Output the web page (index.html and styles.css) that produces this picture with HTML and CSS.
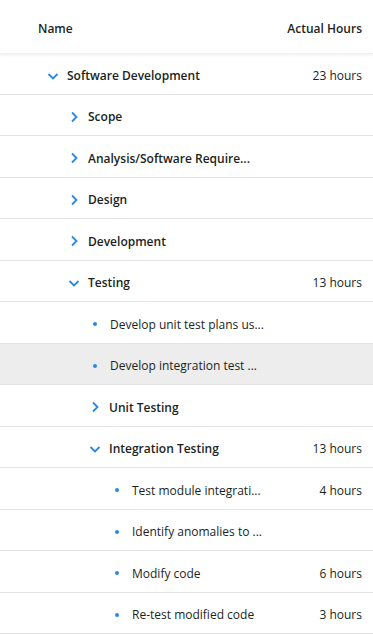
FILE: index.html
```html
<!DOCTYPE html>
<html>
<head>
<meta charset="utf-8">
<link rel="stylesheet" href="styles.css">
</head>
<body>
<div class="grid">
  <div class="header">
    <div class="hname">Name</div>
    <div class="hhours">Actual Hours</div>
  </div>
  <div class="rows">
    <div class="row lv1 group">
      <div class="name"><svg class="chev" viewBox="0 0 12 12"><path d="M1.5 4 L6 8.5 L10.5 4"/></svg><span>Software Development</span></div>
      <div class="hours">23 hours</div>
    </div>
    <div class="row lv2 group">
      <div class="name"><svg class="chev" viewBox="0 0 12 12"><path d="M4 1.5 L8.5 6 L4 10.5"/></svg><span>Scope</span></div>
      <div class="hours"></div>
    </div>
    <div class="row lv2 group">
      <div class="name"><svg class="chev" viewBox="0 0 12 12"><path d="M4 1.5 L8.5 6 L4 10.5"/></svg><span>Analysis/Software Require...</span></div>
      <div class="hours"></div>
    </div>
    <div class="row lv2 group">
      <div class="name"><svg class="chev" viewBox="0 0 12 12"><path d="M4 1.5 L8.5 6 L4 10.5"/></svg><span>Design</span></div>
      <div class="hours"></div>
    </div>
    <div class="row lv2 group">
      <div class="name"><svg class="chev" viewBox="0 0 12 12"><path d="M4 1.5 L8.5 6 L4 10.5"/></svg><span>Development</span></div>
      <div class="hours"></div>
    </div>
    <div class="row lv2 group">
      <div class="name"><svg class="chev" viewBox="0 0 12 12"><path d="M1.5 4 L6 8.5 L10.5 4"/></svg><span>Testing</span></div>
      <div class="hours">13 hours</div>
    </div>
    <div class="row lv3 task">
      <div class="name"><i class="dot"></i><span>Develop unit test plans us...</span></div>
      <div class="hours"></div>
    </div>
    <div class="row lv3 task selected">
      <div class="name"><i class="dot"></i><span>Develop integration test ...</span></div>
      <div class="hours"></div>
    </div>
    <div class="row lv3 group">
      <div class="name"><svg class="chev" viewBox="0 0 12 12"><path d="M4 1.5 L8.5 6 L4 10.5"/></svg><span>Unit Testing</span></div>
      <div class="hours"></div>
    </div>
    <div class="row lv3 group">
      <div class="name"><svg class="chev" viewBox="0 0 12 12"><path d="M1.5 4 L6 8.5 L10.5 4"/></svg><span>Integration Testing</span></div>
      <div class="hours">13 hours</div>
    </div>
    <div class="row lv4 task">
      <div class="name"><i class="dot"></i><span>Test module integrati...</span></div>
      <div class="hours">4 hours</div>
    </div>
    <div class="row lv4 task">
      <div class="name"><i class="dot"></i><span>Identify anomalies to ...</span></div>
      <div class="hours"></div>
    </div>
    <div class="row lv4 task">
      <div class="name"><i class="dot"></i><span>Modify code</span></div>
      <div class="hours">6 hours</div>
    </div>
    <div class="row lv4 task">
      <div class="name"><i class="dot"></i><span>Re-test modified code</span></div>
      <div class="hours">3 hours</div>
    </div>
  </div>
</div>
</body>
</html>
```
FILE: styles.css
```css
html, body {
  margin: 0;
  padding: 0;
  background: #ffffff;
}
body {
  font-family: "Open Sans", "Noto Sans", sans-serif;
  font-size: 12px;
  color: #201f1e;
  overflow: hidden;
}
.grid {
  width: 373px;
}
.header {
  height: 54px;
  display: flex;
  align-items: center;
  justify-content: space-between;
  padding: 4px 11px 0 38px;
  box-sizing: border-box;
  box-shadow: 0 1px 3px rgba(0,0,0,0.07);
  border-bottom: 1px solid #f0f0f0;
  position: relative;
  font-weight: 600;
}
.row {
  box-sizing: border-box;
  height: 40.5px;
  padding-top: 4px;
  border-bottom: 1px solid #e3e3e3;
  display: flex;
  align-items: center;
  justify-content: space-between;
  padding-right: 11px;
}
.row ~ .row {
  height: 41.5px;
}
.row.selected {
  background: #ededed;
}
.name {
  display: flex;
  align-items: center;
  white-space: nowrap;
}
.group .name {
  font-weight: 600;
}
.chev {
  width: 12px;
  height: 12px;
  fill: none;
  stroke: #2b88e0;
  stroke-width: 1.8;
  margin-right: 8px;
}
.dot {
  display: block;
  width: 4px;
  height: 4px;
  border-radius: 50%;
  background: #2b88e0;
  margin: 0 13px 0 4px;
}
.lv1 .name { padding-left: 47px; }
.lv2 .name { padding-left: 68px; }
.lv3 .name { padding-left: 89px; }
.lv4 .name { padding-left: 111px; }
.hours {
  white-space: nowrap;
}
```
